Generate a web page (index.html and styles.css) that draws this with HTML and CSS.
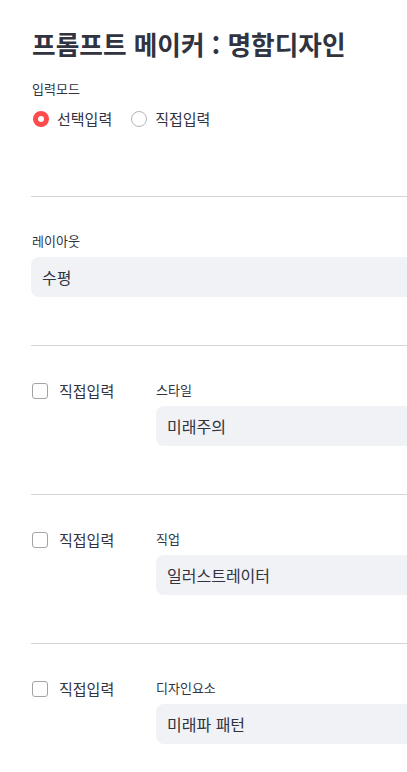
FILE: index.html
```html
<!DOCTYPE html>
<html lang="ko">
<head>
<meta charset="utf-8">
<title>프롬프트 메이커</title>
<link rel="stylesheet" href="styles.css">
</head>
<body>
<div class="main">
  <h1 class="title">프롬프트 메이커 : 명함디자인</h1>
  <div class="label">입력모드</div>
  <div class="radios">
    <div class="radio checked"><span class="dot"></span><span>선택입력</span></div>
    <div class="radio"><span class="dot"></span><span>직접입력</span></div>
  </div>
  <hr class="divider">
  <div class="section">
    <div class="label">레이아웃</div>
    <div class="select">수평</div>
  </div>
  <hr class="divider">
  <div class="section row">
    <div class="check"><span class="box"></span><span>직접입력</span></div>
    <div class="col">
      <div class="label">스타일</div>
      <div class="select">미래주의</div>
    </div>
  </div>
  <hr class="divider">
  <div class="section row">
    <div class="check"><span class="box"></span><span>직접입력</span></div>
    <div class="col">
      <div class="label">직업</div>
      <div class="select">일러스트레이터</div>
    </div>
  </div>
  <hr class="divider">
  <div class="section row">
    <div class="check"><span class="box"></span><span>직접입력</span></div>
    <div class="col">
      <div class="label">디자인요소</div>
      <div class="select">미래파 패턴</div>
    </div>
  </div>
</div>
</body>
</html>
```
FILE: styles.css
```css
html, body {
  margin: 0;
  padding: 0;
  background: #ffffff;
  overflow: hidden;
}
body {
  font-family: "Noto Sans CJK KR", "Noto Sans", sans-serif;
  color: #31333f;
}
.main {
  width: 720px;
  padding: 28px 0 0 31px;
}
.title {
  margin: 0 0 19px 1px;
  font-size: 25.7px;
  line-height: 32px;
  font-weight: 700;
  color: #31333f;
}
.label {
  font-size: 13px;
  line-height: 20px;
  color: #31333f;
  margin-left: 1px;
}
.radios {
  display: flex;
  gap: 19px;
  margin-top: 8px;
  margin-left: 2px;
  height: 24px;
  align-items: center;
}
.radio {
  display: flex;
  align-items: center;
  gap: 8px;
  font-size: 15px;
  line-height: 24px;
}
.dot {
  width: 16px;
  height: 16px;
  box-sizing: border-box;
  border-radius: 50%;
  border: 1px solid #b4b5b9;
  background: #fff;
}
.radio.checked .dot {
  border: 5px solid #ff4b4b;
  background: #ffffff;
}
.divider {
  margin: 65px 0 0 0;
  border: none;
  border-top: 1px solid #d6d6d9;
  height: 0;
}
.section + .divider {
  margin-top: 0;
}
.section {
  padding: 34px 0 48px 0;
}
.select {
  margin-top: 6px;
  height: 40px;
  box-sizing: border-box;
  background: #f0f2f6;
  border-radius: 8px;
  padding-left: 11px;
  display: flex;
  align-items: center;
  font-size: 16px;
  color: #31333f;
}
.row {
  display: flex;
  align-items: flex-start;
}
.check {
  width: 125px;
  flex: none;
  display: flex;
  align-items: center;
  gap: 11px;
  font-size: 15px;
  line-height: 20px;
  height: 20px;
  margin-top: 1px;
}
.box {
  width: 16px;
  height: 16px;
  box-sizing: border-box;
  border: 1px solid #a3a4a9;
  border-radius: 3px;
  margin-left: 1px;
}
.col {
  flex: 1;
}
.col .label {
  margin-left: 0;
}
```
